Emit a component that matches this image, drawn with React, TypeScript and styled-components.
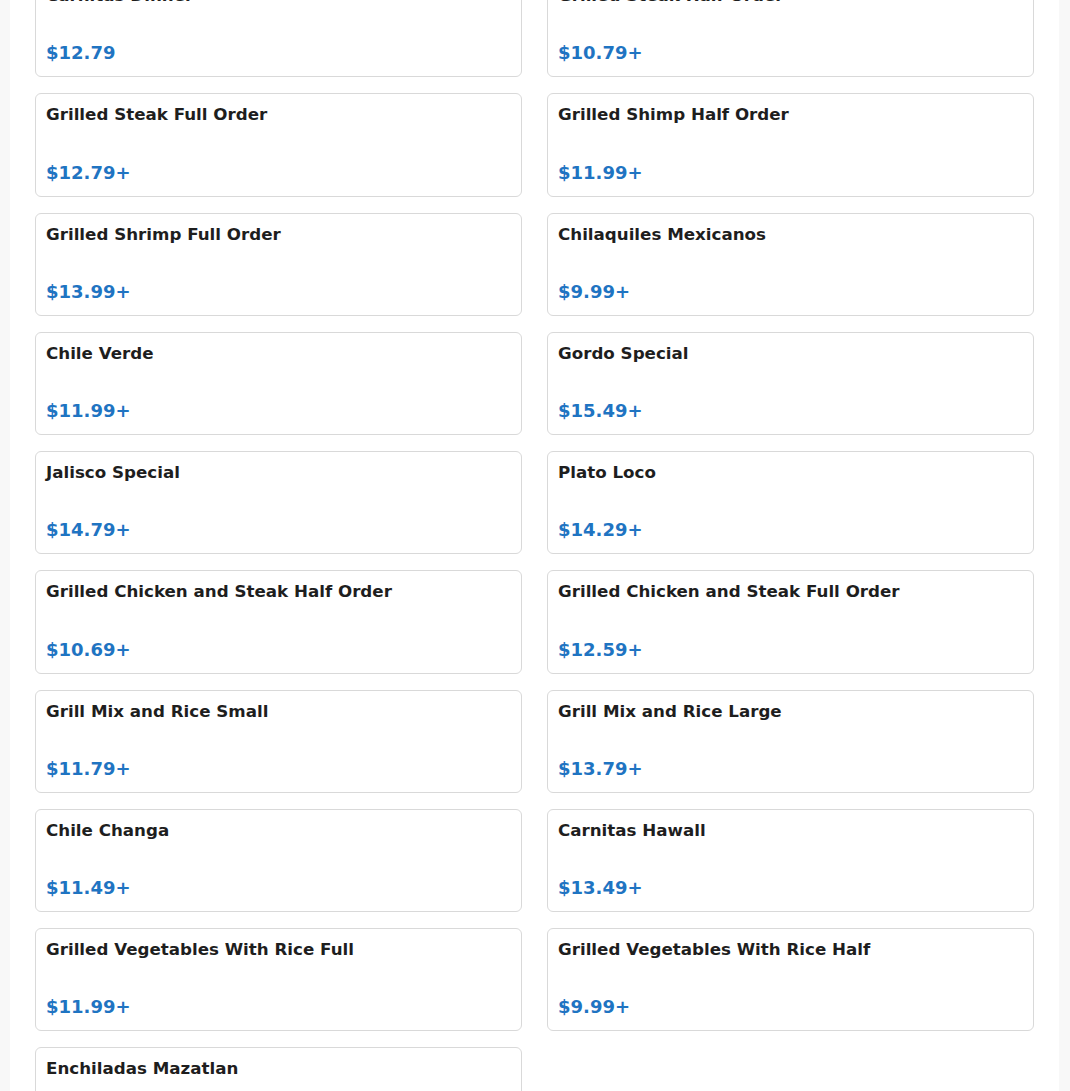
import React from "react";
import styled, { createGlobalStyle } from "styled-components";

const GlobalStyle = createGlobalStyle`
	html,
	body {
		margin: 0;
		padding: 0;
		background: #f8f8f8;
		font-family: "DejaVu Sans", Verdana, sans-serif;
	}
`;

const Page = styled.div`
	height: 1091px;
	overflow: hidden;
`;

const Container = styled.main`
	margin: 0 11px 0 10px;
	background: #ffffff;
	padding: 0 25px;
	min-height: 100%;
	overflow: hidden;
`;

const MenuGrid = styled.div`
	display: grid;
	grid-template-columns: 1fr 1fr;
	column-gap: 25px;
	row-gap: 16px;
	margin-top: -26px;
`;

const Card = styled.div`
	box-sizing: border-box;
	height: 103.25px;
	display: flex;
	flex-direction: column;
	justify-content: space-between;
	padding: 10px 10px 13px 10px;
	border: 1px solid #d9d9d9;
	border-radius: 6px;
	background: #fff;
`;

const Title = styled.h3`
	margin: 0;
	font-size: 16.7px;
	font-weight: bold;
	color: #1e1e1e;
`;

const Price = styled.span`
	font-size: 18px;
	font-weight: bold;
	color: #1f74c2;
`;

const items: [string, string][] = [
	["Carnitas Dinner", "$12.79"],
	["Grilled Steak Half Order", "$10.79+"],
	["Grilled Steak Full Order", "$12.79+"],
	["Grilled Shimp Half Order", "$11.99+"],
	["Grilled Shrimp Full Order", "$13.99+"],
	["Chilaquiles Mexicanos", "$9.99+"],
	["Chile Verde", "$11.99+"],
	["Gordo Special", "$15.49+"],
	["Jalisco Special", "$14.79+"],
	["Plato Loco", "$14.29+"],
	["Grilled Chicken and Steak Half Order", "$10.69+"],
	["Grilled Chicken and Steak Full Order", "$12.59+"],
	["Grill Mix and Rice Small", "$11.79+"],
	["Grill Mix and Rice Large", "$13.79+"],
	["Chile Changa", "$11.49+"],
	["Carnitas Hawall", "$13.49+"],
	["Grilled Vegetables With Rice Full", "$11.99+"],
	["Grilled Vegetables With Rice Half", "$9.99+"],
	["Enchiladas Mazatlan", "$12.99+"],
];

export default function App() {
	return (
		<Page>
			<GlobalStyle />
			<Container>
				<MenuGrid>
					{items.map(([name, price]) => (
						<Card key={name}>
							<Title>{name}</Title>
							<Price>{price}</Price>
						</Card>
					))}
				</MenuGrid>
			</Container>
		</Page>
	);
}
